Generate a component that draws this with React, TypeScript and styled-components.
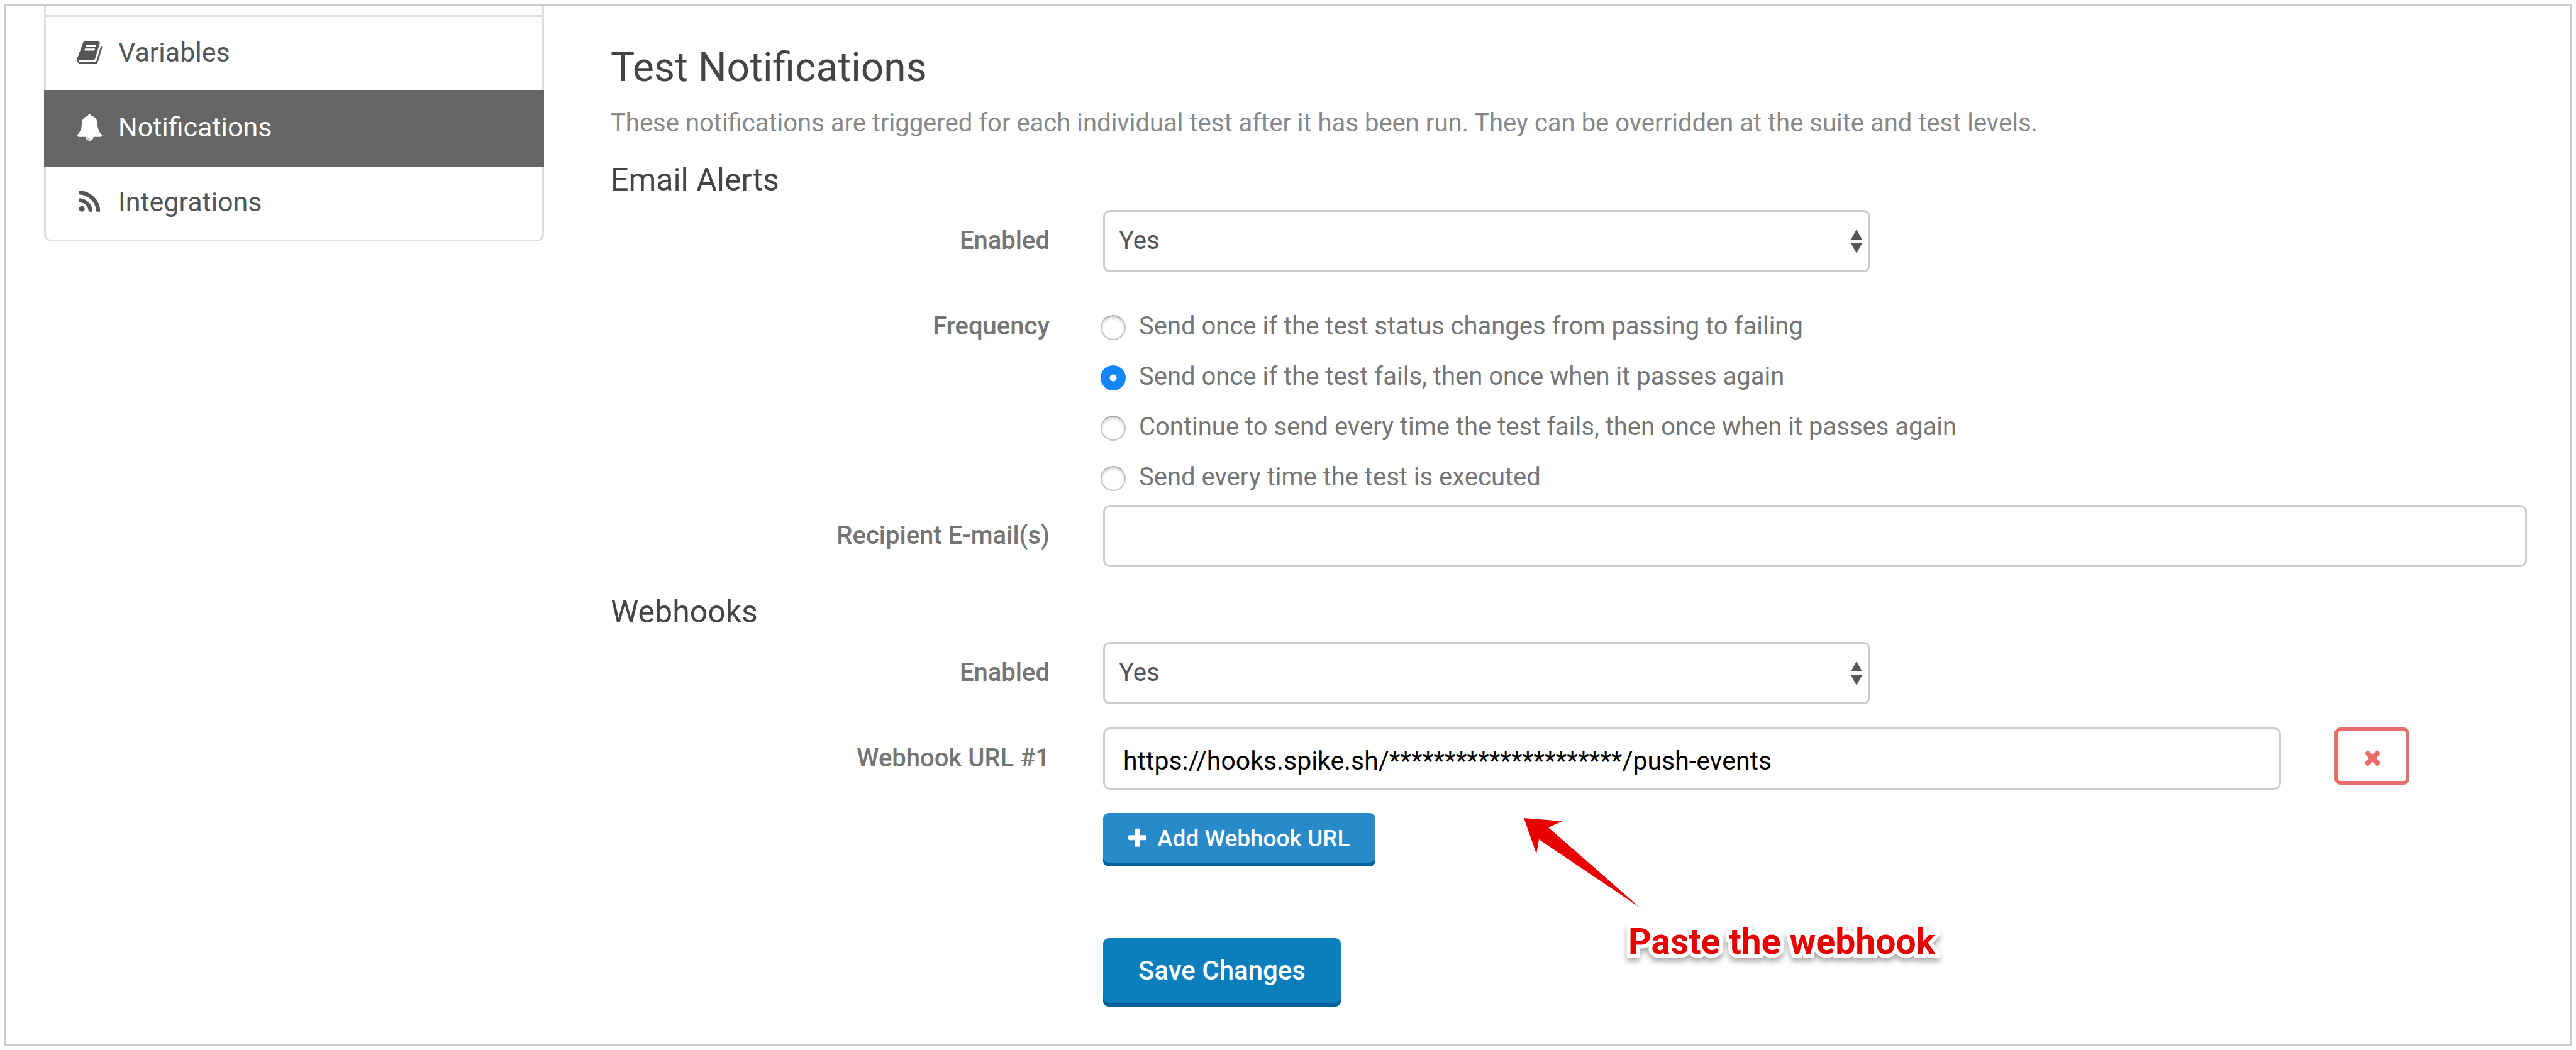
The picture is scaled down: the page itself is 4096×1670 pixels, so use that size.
import React, { useState } from "react";
import styled, { createGlobalStyle, css } from "styled-components";

const GlobalStyle = createGlobalStyle`
  *, *::before, *::after { box-sizing: border-box; }
  body {
    margin: 0;
    background: #ffffff;
    font-family: Roboto, "Liberation Sans", sans-serif;
    font-size: 40px;
    line-height: 56px;
    color: #757575;
  }
  button, input, select { font: inherit; margin: 0; }
`;

const Page = styled.div`
  min-height: 100vh;
  padding: 7px;
  display: flex;
`;

const Frame = styled.div`
  flex: 1;
  display: grid;
  grid-template-columns: 795fr 3047fr;
  column-gap: 106px;
  align-items: start;
  padding: 0 68px 48px 60px;
  border: 3px solid #cccccc;
`;

const Sidebar = styled.nav`
  display: flex;
  flex-direction: column;
`;

const SidebarStub = styled.div`
  height: 14px;
  border: solid #dddddd;
  border-width: 0 3px;
`;

const NavLink = styled.a<{ $active?: boolean }>`
  display: flex;
  align-items: center;
  gap: 24px;
  height: 122px;
  padding: 0 48px 4px;
  border: 3px solid #dddddd;
  font-size: 43px;
  color: #555555;
  text-decoration: none;

  & + & { margin-top: -3px; }
  &:last-child { border-radius: 0 0 11px 11px; }

  ${(p) =>
    p.$active &&
    css`
      z-index: 1;
      border-color: #666666;
      background: #666666;
      color: #ffffff;
    `}
`;

const Glyph = styled.svg<{ $size: number }>`
  flex: none;
  width: ${(p) => p.$size}px;
  height: ${(p) => p.$size}px;
  fill: currentColor;
`;

const Main = styled.main`
  padding-top: 56px;
`;

const Title = styled.h1`
  margin: 0;
  font-size: 64px;
  line-height: 84px;
  font-weight: 400;
  color: #444444;
`;

const Intro = styled.p`
  margin: 18px 0 0;
  line-height: 56px;
  color: #888888;
`;

const Section = styled.h2`
  margin: 0;
  padding: 30px 0 16px;
  font-size: 50px;
  line-height: 64px;
  font-weight: 400;
  color: #444444;
`;

const Row = styled.div<{ $gap?: number }>`
  display: grid;
  grid-template-columns: repeat(12, minmax(0, 1fr));
  column-gap: 85px;
  margin-bottom: ${(p) => p.$gap ?? 0}px;
`;

const labelStyle = css`
  grid-column: span 3;
  padding-top: 21px;
  text-align: right;
  font-weight: 500;
`;

const Label = styled.label`
  ${labelStyle}
`;

const GroupLabel = styled.span`
  ${labelStyle}
`;

const Controls = styled.div`
  grid-column: 4 / span 9;
`;

const SelectBox = styled.div`
  grid-column: span 5;
  position: relative;
`;

const fieldStyle = css`
  display: block;
  width: 100%;
  height: 99px;
  border: 3px solid #cccccc;
  border-radius: 11px;
  background: #ffffff;
  outline: none;
`;

const Select = styled.select`
  ${fieldStyle}
  appearance: none;
  padding: 0 60px 1px 22px;
  color: #555555;
`;

const SelectArrows = styled.svg`
  position: absolute;
  right: 13px;
  top: 31px;
  width: 18px;
  height: 38px;
  fill: #555555;
  pointer-events: none;
`;

const Input = styled.input`
  ${fieldStyle}
  padding: 7px 29px 0;
  font-size: 41px;
  color: #000000;
`;

const RadioList = styled.div`
  grid-column: span 9;
  display: flex;
  flex-direction: column;
  padding-top: 9px;
`;

const RadioLabel = styled.label`
  display: flex;
  align-items: center;
  gap: 21px;
  height: 80px;
  margin-left: -4px;
`;

const Radio = styled.input`
  appearance: none;
  flex: none;
  width: 40px;
  height: 40px;
  margin: 4px 0 0;
  border: 2px solid #c2c2c2;
  border-top-color: #a2a2a2;
  border-radius: 50%;
  background: #ffffff;
  box-shadow: inset 0 3px 4px rgba(0, 0, 0, 0.16);

  &:checked {
    border: 0;
    background: radial-gradient(circle, #ffffff 5px, #1386fc 6px);
    box-shadow: none;
  }
`;

const WebhookGrid = styled.div`
  grid-column: span 9;
  display: grid;
  grid-template-columns: repeat(12, minmax(0, 1fr));
  column-gap: 85px;
  align-items: start;
`;

const WebhookField = styled.div`
  grid-column: span 10;
`;

const RemoveButton = styled.button`
  width: 119px;
  height: 91px;
  padding: 4px 0 0 2px;
  display: flex;
  align-items: center;
  justify-content: center;
  border: 6px solid #ea6e68;
  border-radius: 9px;
  background: #ffffff;
  color: #ea6e68;
`;

const Button = styled.button<{ $large?: boolean }>`
  display: flex;
  align-items: center;
  gap: 13px;
  height: ${(p) => (p.$large ? 109 : 85)}px;
  padding: ${(p) => (p.$large ? "0 56px 6px" : "0 40px 4px 36px")};
  border: 0;
  border-radius: 9px;
  background: ${(p) => (p.$large ? "#0d7ebc" : "#288ac9")};
  box-shadow: inset 0 -6px 0 #00629a;
  color: #ffffff;
  font-size: ${(p) => (p.$large ? 42 : 37)}px;
  font-weight: 500;
`;

const SaveSlot = styled.div`
  margin-top: 114px;
`;

const CalloutAnchor = styled.div`
  position: relative;
`;

const Callout = styled.div`
  position: absolute;
  left: 669px;
  top: 8px;
`;

const CalloutArrow = styled.svg`
  display: block;
  width: 184px;
  height: 142px;
  fill: #e80000;
`;

const CalloutText = styled.div`
  margin: 17px 0 0 166px;
  font-size: 57px;
  line-height: 75px;
  font-weight: 700;
  white-space: nowrap;
  color: #e80000;
  -webkit-text-stroke: 12px #ffffff;
  paint-order: stroke fill;
  filter: drop-shadow(0 6px 4px rgba(0, 0, 0, 0.34));
`;

const ICONS = {
  book: "M1703 478q40 57 18 129l-275 906q-19 64-76.5 107.5t-122.5 43.5h-923q-77 0-148.5-53.5t-99.5-131.5q-24-67-2-127 0-4 3-27t4-37q1-8-3-21.5t-3-19.5q2-11 8-21t16.5-23.5 16.5-23.5q23-38 45-91.5t30-91.5q3-10 .5-30t-.5-28q3-11 17-28t17-23q21-36 42-92t25-90q1-9-2.5-32t.5-28q4-13 22-30.5t22-22.5q19-26 42.5-84.5t27.5-96.5q1-8-3-25.5t-2-26.5q2-8 9-18t18-23 17-21q8-12 16.5-30.5t15-35 16-36 19.5-32 26.5-23.5 36-11.5 47.5 5.5l-1 3q38-9 51-9h761q74 0 114 56t18 130l-274 906q-36 119-71.5 153.5t-128.5 34.5h-869q-27 0-38 15-11 16-1 43 24 70 144 70h923q29 0 56-15.5t35-41.5l300-987q7-22 5-57 38 15 59 43zm-1064 2q-4 13 2 22.5t20 9.5h608q13 0 25.5-9.5t16.5-22.5l21-64q4-13-2-22.5t-20-9.5h-608q-13 0-25.5 9.5t-16.5 22.5zm-83 256q-4 13 2 22.5t20 9.5h608q13 0 25.5-9.5t16.5-22.5l21-64q4-13-2-22.5t-20-9.5h-608q-13 0-25.5 9.5t-16.5 22.5z",
  bell: "M912 1696q0-16-16-16-59 0-101.5-42.5t-42.5-101.5q0-16-16-16t-16 16q0 73 51.5 124.5t124.5 51.5q16 0 16-16zm816-288q0 52-38 90t-90 38h-448q0 106-75 181t-181 75-181-75-75-181h-448q-52 0-90-38t-38-90q50-42 91-88t85-119.5 74.5-158.5 50-206 19.5-260q0-152 117-282.5t307-158.5q-8-19-8-39 0-40 28-68t68-28 68 28 28 68q0 20-8 39 190 28 307 158.5t117 282.5q0 139 19.5 260t50 206 74.5 158.5 85 119.5 91 88z",
  rss: "M576 1344q0 80-56 136t-136 56-136-56-56-136 56-136 136-56 136 56 56 136zm512 123q2 28-17 48-18 21-47 21h-135q-25 0-43-16.5t-20-41.5q-22-229-184.5-391.5t-391.5-184.5q-25-2-41.5-20t-16.5-43v-135q0-29 21-47 17-17 43-17h5q160 13 306 80.5t259 181.5q114 113 181.5 259t80.5 306zm512 2q2 27-18 47-18 20-46 20h-143q-26 0-44.5-17.5t-19.5-42.5q-12-215-101-408.5t-231.5-336-336-231.5-408.5-102q-25-1-42.5-19.5t-17.5-43.5v-143q0-28 20-46 18-18 44-18h3q262 13 501.5 120t425.5 294q187 186 294 425.5t120 501.5z",
  plus: "M1600 736v192q0 40-28 68t-68 28h-416v416q0 40-28 68t-68 28h-192q-40 0-68-28t-28-68v-416h-416q-40 0-68-28t-28-68v-192q0-40 28-68t68-28h416v-416q0-40 28-68t68-28h192q40 0 68 28t28 68v416h416q40 0 68 28t28 68z",
  times: "M1490 1322q0 40-28 68l-136 136q-28 28-68 28t-68-28l-294-294-294 294q-28 28-68 28t-68-28l-136-136q-28-28-28-68t28-68l294-294-294-294q-28-28-28-68t28-68l136-136q28-28 68-28t68 28l294 294 294-294q28-28 68-28t68 28l136 136q28 28 28 68t-28 68l-294 294 294 294q28 28 28 68z",
};

function Icon({ name, size }: { name: keyof typeof ICONS; size: number }) {
  return (
    <Glyph $size={size} viewBox="0 0 1792 1792" aria-hidden="true">
      <path d={ICONS[name]} />
    </Glyph>
  );
}

const NAV: { label: string; icon: keyof typeof ICONS; active?: boolean }[] = [
  { label: "Variables", icon: "book" },
  { label: "Notifications", icon: "bell", active: true },
  { label: "Integrations", icon: "rss" },
];

const FREQUENCIES = [
  "Send once if the test status changes from passing to failing",
  "Send once if the test fails, then once when it passes again",
  "Continue to send every time the test fails, then once when it passes again",
  "Send every time the test is executed",
];

function EnabledRow({ id }: { id: string }) {
  return (
    <Row $gap={37}>
      <Label htmlFor={id}>Enabled</Label>
      <SelectBox>
        <Select id={id} defaultValue="Yes">
          <option>Yes</option>
          <option>No</option>
        </Select>
        <SelectArrows viewBox="0 0 18 38" aria-hidden="true">
          <path d="M9 0l9 16H0zM9 38l9-16H0z" />
        </SelectArrows>
      </SelectBox>
    </Row>
  );
}

export default function App() {
  const [frequency, setFrequency] = useState(1);
  const [url, setUrl] = useState("https://hooks.spike.sh/*********************/push-events");

  return (
    <>
      <GlobalStyle />
      <Page>
        <Frame>
          <Sidebar>
            <SidebarStub />
            {NAV.map((item) => (
              <NavLink key={item.label} href="#" $active={item.active}>
                <Icon name={item.icon} size={43} />
                {item.label}
              </NavLink>
            ))}
          </Sidebar>

          <Main>
            <Title>Test Notifications</Title>
            <Intro>
              These notifications are triggered for each individual test after it has been run. They can be
              overridden at the suite and test levels.
            </Intro>

            <Section>Email Alerts</Section>
            <EnabledRow id="email-enabled" />
            <Row $gap={4} role="radiogroup" aria-labelledby="frequency-label">
              <GroupLabel id="frequency-label">Frequency</GroupLabel>
              <RadioList>
                {FREQUENCIES.map((text, i) => (
                  <RadioLabel key={text}>
                    <Radio
                      type="radio"
                      name="frequency"
                      checked={frequency === i}
                      onChange={() => setFrequency(i)}
                    />
                    {text}
                  </RadioLabel>
                ))}
              </RadioList>
            </Row>
            <Row $gap={9}>
              <Label htmlFor="recipients">Recipient E-mail(s)</Label>
              <Controls>
                <Input id="recipients" type="text" />
              </Controls>
            </Row>

            <Section>Webhooks</Section>
            <EnabledRow id="webhooks-enabled" />
            <Row $gap={37}>
              <Label htmlFor="webhook-url">Webhook URL #1</Label>
              <WebhookGrid>
                <WebhookField>
                  <Input id="webhook-url" type="text" value={url} onChange={(e) => setUrl(e.target.value)} />
                </WebhookField>
                <RemoveButton type="button" aria-label="Remove webhook URL">
                  <Icon name="times" size={37} />
                </RemoveButton>
              </WebhookGrid>
            </Row>
            <Row>
              <Controls>
                <CalloutAnchor>
                  <Button type="button">
                    <Icon name="plus" size={37} />
                    Add Webhook URL
                  </Button>
                  <Callout>
                    <CalloutArrow viewBox="0 0 184 142" aria-hidden="true">
                      <path d="M0 0L61 5L39 15L184 142L24 34L20 57Z" />
                    </CalloutArrow>
                    <CalloutText>Paste the webhook</CalloutText>
                  </Callout>
                </CalloutAnchor>
                <SaveSlot>
                  <Button type="submit" $large>
                    Save Changes
                  </Button>
                </SaveSlot>
              </Controls>
            </Row>
          </Main>
        </Frame>
      </Page>
    </>
  );
}
